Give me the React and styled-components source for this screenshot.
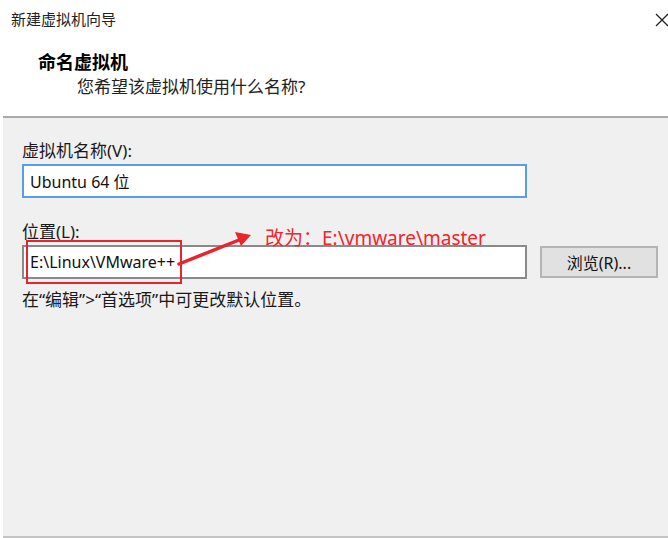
import styled, { createGlobalStyle } from "styled-components";

const GlobalStyle = createGlobalStyle`
  html, body {
    margin: 0;
    padding: 0;
    background: #ffffff;
  }
  body {
    font-family: "Noto Sans", "Noto Sans CJK SC", sans-serif;
    color: #1a1a1a;
  }
`;

export default function App() {
  return (
    <>
      <GlobalStyle />
      <Window>
        <TitleBar>
          <Title>新建虚拟机向导</Title>
          <CloseButton aria-label="close">
            <svg width="14" height="14" viewBox="0 0 14 14">
              <path d="M1 1 L13 13 M13 1 L1 13" stroke="#222" strokeWidth="1.3" />
            </svg>
          </CloseButton>
        </TitleBar>
        <Header>
          <HeaderTitle>命名虚拟机</HeaderTitle>
          <HeaderSub>您希望该虚拟机使用什么名称?</HeaderSub>
        </Header>
        <Body>
          <Field>
            <Label>虚拟机名称(V):</Label>
            <TextBox $focused>Ubuntu 64 位</TextBox>
          </Field>
          <Field>
            <Label>位置(L):</Label>
            <Row>
              <TextBox>E:\Linux\VMware++</TextBox>
              <Button>浏览(R)...</Button>
            </Row>
            <Hint>在“编辑”&gt;“首选项”中可更改默认位置。</Hint>
          </Field>

          <Highlight />
          <Arrow width="80" height="40" viewBox="0 0 80 40">
            <path d="M2 36 L62 12" stroke="#e8242c" strokeWidth="3.5" strokeLinecap="round" />
            <path d="M74 7 L58 4 L64 18 Z" fill="#e8242c" />
          </Arrow>
          <Note>改为：E:\vmware\master</Note>
        </Body>
      </Window>
    </>
  );
}

const Window = styled.div`
  width: 668px;
  height: 538px;
  display: flex;
  flex-direction: column;
  background: #ffffff;
  overflow: hidden;
`;

const TitleBar = styled.div`
  height: 38px;
  display: flex;
  align-items: center;
  justify-content: space-between;
  padding-left: 11px;
`;

const Title = styled.div`
  font-size: 15px;
  color: #222;
  margin-top: -2px;
`;

const CloseButton = styled.div`
  width: 16px;
  height: 16px;
  margin-right: -3px;
  margin-top: -2px;
`;

const Header = styled.div`
  height: 80px;
  box-sizing: border-box;
  padding-left: 35px;
  border-bottom: 2px solid #a9a9a9;
  margin-left: 3px;
  display: flex;
  flex-direction: column;
`;

const HeaderTitle = styled.div`
  font-size: 18px;
  line-height: 22px;
  font-weight: 700;
  color: #000;
  margin-top: 13px;
`;

const HeaderSub = styled.div`
  font-size: 17px;
  line-height: 22px;
  color: #222;
  margin-left: 39px;
  margin-top: 3px;
`;

const Body = styled.div`
  position: relative;
  flex: 1;
  margin-left: 3px;
  background: #f0f0f0;
  border-bottom: 2px solid #c4c4c4;
  padding: 21px 10px 0 19px;
  display: flex;
  flex-direction: column;
  gap: 22px;
`;

const Field = styled.div`
  display: flex;
  flex-direction: column;
`;

const Label = styled.div`
  font-size: 17px;
  line-height: 23px;
  color: #1a1a1a;
  margin-bottom: 2px;
`;

const Row = styled.div`
  display: flex;
  align-items: center;
  gap: 13px;
`;

const TextBox = styled.div`
  box-sizing: border-box;
  width: 505px;
  height: 34px;
  display: flex;
  align-items: center;
  padding-left: 6px;
  background: #ffffff;
  border: 2px solid ${(p) => (p.$focused ? "#5b9ee0" : "#8a8a8a")};
  font-size: 16px;
  color: #111;
`;

const Button = styled.div`
  box-sizing: border-box;
  width: 118px;
  height: 32px;
  display: flex;
  align-items: center;
  justify-content: center;
  background: #e1e1e1;
  border: 2px solid #b4b4b4;
  font-size: 16px;
  color: #111;
`;

const Hint = styled.div`
  font-size: 17px;
  line-height: 19px;
  color: #1a1a1a;
  margin-top: 11px;
`;

const Highlight = styled.div`
  position: absolute;
  left: 23px;
  top: 122px;
  width: 156px;
  height: 44px;
  border: 2px solid #e8242c;
  box-sizing: border-box;
`;

const Arrow = styled.svg`
  position: absolute;
  left: 174px;
  top: 110px;
`;

const Note = styled.div`
  position: absolute;
  left: 262px;
  top: 105px;
  font-size: 19px;
  color: #f2242c;
`;
